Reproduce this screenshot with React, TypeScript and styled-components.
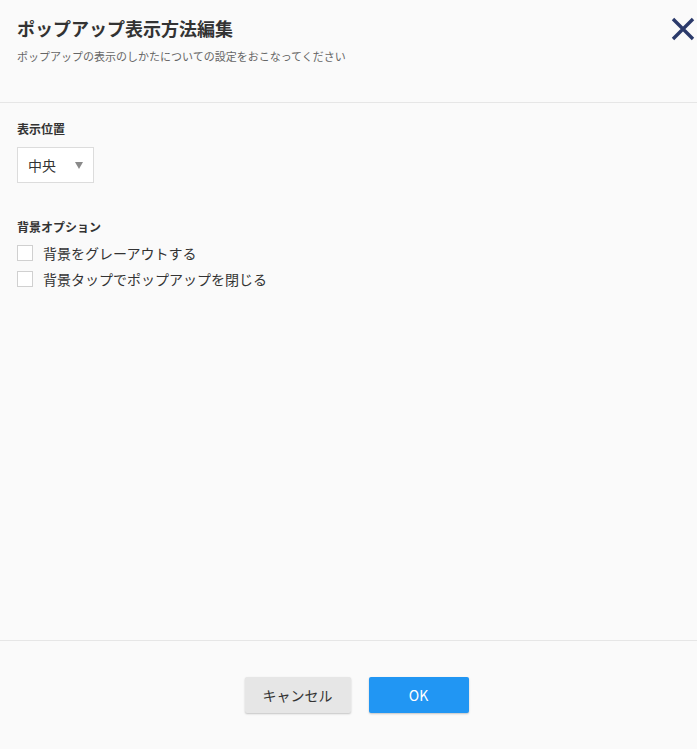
import React from "react";
import styled, { createGlobalStyle } from "styled-components";

const Global = createGlobalStyle`
  html, body { margin: 0; padding: 0; background: #fafafa; }
  body { font-family: "Noto Sans CJK JP", "Noto Sans", sans-serif; color: #333; }
  * { box-sizing: border-box; }
`;

const Page = styled.div`
  height: 749px;
  display: flex;
  flex-direction: column;
  background: #fafafa;
`;

const Header = styled.header`
  height: 103px;
  border-bottom: 1px solid #e6e6e6;
  display: flex;
  justify-content: space-between;
  align-items: flex-start;
  padding: 16px 2px 0 17px;
`;

const TitleBlock = styled.div`
  display: flex;
  flex-direction: column;
  gap: 8px;
`;

const Title = styled.h1`
  margin: 0;
  font-size: 18px;
  line-height: 24px;
  font-weight: 700;
  color: #333;
`;

const Subtitle = styled.p`
  margin: 0;
  font-size: 11px;
  line-height: 16px;
  color: #666;
`;

const CloseButton = styled.button`
  border: 0;
  background: transparent;
  padding: 0;
  margin-top: 1px;
  width: 24px;
  height: 24px;
  cursor: pointer;
  display: block;
`;

const Body = styled.main`
  flex: 1;
  padding: 18px 17px 0;
  display: flex;
  flex-direction: column;
`;

const Section = styled.section<{ $gap: number }>`
  display: flex;
  flex-direction: column;
  gap: ${(p) => p.$gap}px;
  margin-bottom: 36px;
`;

const Label = styled.div`
  font-size: 12px;
  line-height: 16px;
  font-weight: 700;
  color: #333;
`;

const Select = styled.div`
  width: 77px;
  height: 36px;
  border: 1px solid #dcdcdc;
  background: #fff;
  display: flex;
  align-items: center;
  justify-content: space-between;
  padding: 0 10px 0 10px;
  font-size: 14px;
  color: #333;
`;

const Arrow = styled.span`
  width: 0;
  height: 0;
  border-left: 4px solid transparent;
  border-right: 4px solid transparent;
  border-top: 7px solid #8a8a8a;
  margin-top: 1px;
`;

const Options = styled.div`
  display: flex;
  flex-direction: column;
  gap: 6px;
`;

const CheckRow = styled.label`
  display: flex;
  align-items: center;
  gap: 10px;
  height: 20px;
  font-size: 14px;
  color: #333;
`;

const Box = styled.span`
  width: 16px;
  height: 16px;
  border: 1px solid #d0d0d0;
  background: #fff;
  flex: none;
`;

const Footer = styled.footer`
  height: 109px;
  border-top: 1px solid #e6e6e6;
  display: flex;
  justify-content: center;
  align-items: flex-start;
  gap: 18px;
  padding: 36px 0 0 16px;
`;

const Button = styled.button<{ $primary?: boolean }>`
  height: 36px;
  width: ${(p) => (p.$primary ? 100 : 106)}px;
  border: 0;
  border-radius: 2px;
  font-family: inherit;
  font-size: 14px;
  cursor: pointer;
  background: ${(p) => (p.$primary ? "#2196f3" : "#e6e6e6")};
  color: ${(p) => (p.$primary ? "#fff" : "#333")};
  box-shadow: 0 1px 2px rgba(0, 0, 0, 0.22);
`;

export default function App() {
  return (
    <Page>
      <Global />
      <Header>
        <TitleBlock>
          <Title>ポップアップ表示方法編集</Title>
          <Subtitle>ポップアップの表示のしかたについての設定をおこなってください</Subtitle>
        </TitleBlock>
        <CloseButton aria-label="閉じる">
          <svg width="24" height="24" viewBox="0 0 24 24">
            <path d="M2 2 L22 22 M22 2 L2 22" stroke="#2b3a6a" strokeWidth="3.4" strokeLinecap="butt" fill="none" />
          </svg>
        </CloseButton>
      </Header>
      <Body>
        <Section $gap={10}>
          <Label>表示位置</Label>
          <Select>
            <span>中央</span>
            <Arrow />
          </Select>
        </Section>
        <Section $gap={8}>
          <Label>背景オプション</Label>
          <Options>
            <CheckRow>
              <Box />
              背景をグレーアウトする
            </CheckRow>
            <CheckRow>
              <Box />
              背景タップでポップアップを閉じる
            </CheckRow>
          </Options>
        </Section>
      </Body>
      <Footer>
        <Button>キャンセル</Button>
        <Button $primary>OK</Button>
      </Footer>
    </Page>
  );
}
